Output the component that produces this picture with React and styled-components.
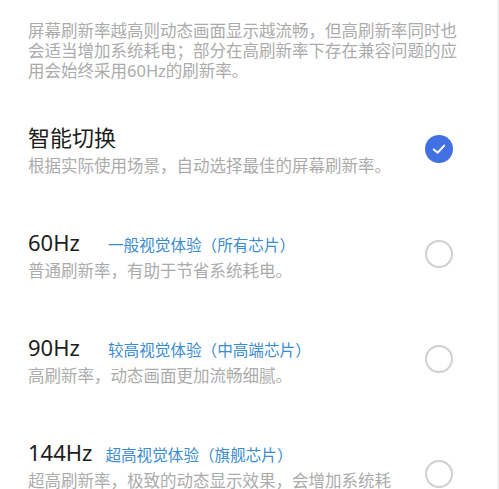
import React from 'react';
import styled, { createGlobalStyle } from 'styled-components';

const GRAY = '#ababab';
const BLACK = '#1c1c1c';
const LINK = '#3b8ccf';
const ACCENT = '#4170e3';

const GlobalStyle = createGlobalStyle`
  html, body {
    margin: 0;
    padding: 0;
    background: #ffffff;
    overflow: hidden;
    height: 489px;
  }
  body {
    font-family: "Noto Sans", "Noto Sans CJK SC", sans-serif;
  }
`;

const Page = styled.div`
  box-sizing: border-box;
  height: 489px;
  padding: 21px 26px 0 28px;
  border-right: 2px solid #eeeeee;
`;

const Intro = styled.p`
  margin: 0 0 41px;
  font-size: 16.5px;
  line-height: 20px;
  color: ${GRAY};
`;

const List = styled.div`
  display: flex;
  flex-direction: column;
  gap: 51px;
`;

const Row = styled.div`
  display: flex;
  align-items: center;
  gap: 27px;
  padding-right: 18px;
`;

const Text = styled.div`
  flex: 1;
  min-width: 0;
`;

const TitleLine = styled.div`
  display: flex;
  align-items: baseline;
`;

const Title = styled.span`
  font-size: 22px;
  line-height: 30px;
  color: ${BLACK};
  min-width: ${(p) => (p.$wide ? 'auto' : '66px')};
  margin-right: ${(p) => (p.$wide ? '13px' : '14px')};
`;

const Tag = styled.span`
  font-size: 15.6px;
  color: ${LINK};
`;

const Desc = styled.div`
  margin-top: 4px;
  font-size: 16.5px;
  line-height: 20px;
  color: ${GRAY};
`;

const Radio = styled.div`
  box-sizing: border-box;
  flex: none;
  width: 28px;
  height: 28px;
  border-radius: 50%;
  border: ${(p) => (p.$checked ? 'none' : '2px solid #d0d0d0')};
  background: ${(p) => (p.$checked ? ACCENT : 'transparent')};
  display: flex;
  align-items: center;
  justify-content: center;
`;

const Check = () => (
  <svg width="16" height="16" viewBox="0 0 16 16" fill="none">
    <path d="M2.8 8.4 L6.6 11.8 L13.2 4.6" stroke="#fff" strokeWidth="2" strokeLinecap="round" strokeLinejoin="round" />
  </svg>
);

const options = [
  { title: '智能切换', desc: '根据实际使用场景，自动选择最佳的屏幕刷新率。', checked: true },
  { title: '60Hz', tag: '一般视觉体验（所有芯片）', desc: '普通刷新率，有助于节省系统耗电。' },
  { title: '90Hz', tag: '较高视觉体验（中高端芯片）', desc: '高刷新率，动态画面更加流畅细腻。' },
  { title: '144Hz', tag: '超高视觉体验（旗舰芯片）', desc: '超高刷新率，极致的动态显示效果，会增加系统耗电。', wide: true },
];

export default function App() {
  return (
    <>
      <GlobalStyle />
      <Page>
        <Intro>
          屏幕刷新率越高则动态画面显示越流畅，但高刷新率同时也会适当增加系统耗电；部分在高刷新率下存在兼容问题的应用会始终采用60Hz的刷新率。
        </Intro>
        <List>
          {options.map((o) => (
            <Row key={o.title}>
              <Text>
                <TitleLine>
                  <Title $wide={o.wide || !o.tag}>{o.title}</Title>
                  {o.tag && <Tag>{o.tag}</Tag>}
                </TitleLine>
                <Desc>{o.desc}</Desc>
              </Text>
              <Radio $checked={o.checked}>{o.checked && <Check />}</Radio>
            </Row>
          ))}
        </List>
      </Page>
    </>
  );
}
